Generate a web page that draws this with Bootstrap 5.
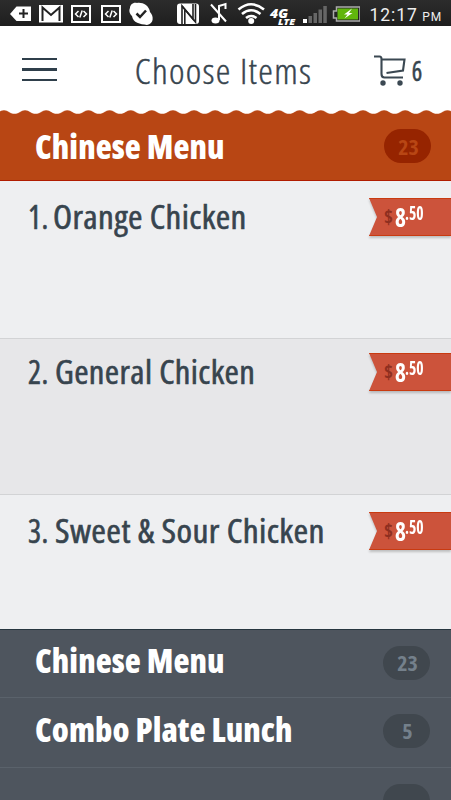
<!DOCTYPE html>
<html lang="en">
<head>
<meta charset="utf-8">
<meta name="viewport" content="width=device-width, initial-scale=1">
<title>Choose Items</title>
<link href="https://cdn.jsdelivr.net/npm/bootstrap@5.3.0/dist/css/bootstrap.min.css" rel="stylesheet">
<style>
body{font-family:"Open Sans","Noto Sans",sans-serif;background:#fff;color:#37444e;height:800px;line-height:1}
.statusbar{height:26px;background:linear-gradient(#2c2c2c,#1e1e1e);color:#eee;font-family:Roboto,sans-serif}
.clock{width:91px;padding-left:9.500px;padding-top:6px;font-size:17.5px;letter-spacing:.95px;line-height:18px}
.clock small{font-size:12px;letter-spacing:.8px;margin-left:4.5px}
.topbar{height:84px;padding:3px 28px 0 22px}
.burger{width:35px;height:24px}
.burger i{height:2.4px;background:#2f3f4b}
.page-title{font-size:34px;font-weight:300;font-stretch:75%;letter-spacing:1.2px;margin-left:17px;padding-top:3px;transform:scaleX(1.088);-webkit-text-stroke:.4px #37444e}
.cart-count{font-size:28px;font-weight:400;font-stretch:75%;margin-left:2px;-webkit-text-stroke:.5px #37444e;transform:scaleX(.88)}
.scallop{height:5px}
.section-row{padding:0 21px 0 35px;color:#fff}
.section-title{font-size:33px;font-weight:800;font-stretch:75%;margin:0;padding-bottom:2px;letter-spacing:.08px}
.count-pill{width:47px;height:34px;border-radius:17px;font-size:22px;font-weight:700;font-stretch:75%;padding-left:2px;padding-bottom:1px}
.is-open{height:66px;background:#b84614;border-bottom:1px solid #b01c00;padding-right:20px}
.is-open .count-pill{background:#962400;color:#b84614;margin-bottom:3px}
.is-closed{background:#4e555e;border-bottom:1px solid #5a626b}
.is-closed .section-title{padding-bottom:6px}
.is-closed .count-pill{background:#40474e;color:#74808b;margin-bottom:2px}
.dish{background:#eeeff1;border-bottom:1px solid #d2d3d5;padding-left:28px}
.dish-alt{background:#e7e7e9}
.dish-name{font-size:33px;font-weight:400;font-stretch:75%;letter-spacing:.35px;margin:-1px 0 0;-webkit-text-stroke:.6px #37444e;white-space:nowrap}
.dish-no{width:27px;flex:none}
.dish-no b{display:inline-block;font-weight:inherit;transform:scaleX(.93);transform-origin:0 0}
.dish-label{transform:scaleX(var(--fit));transform-origin:0 0}
.ribbon{width:82px;height:38px;flex:none;filter:drop-shadow(0 2px 1px rgba(0,0,0,.2))}
.ribbon-shape{background:#cc533b;border-top:1px solid #c93a10;border-bottom:1px solid #c93a10;clip-path:polygon(0 0,100% 0,100% 100%,0 100%,8px 50%);padding-left:15px;color:#fff}
.cur{font-size:19px;font-weight:700;font-stretch:75%;color:#8e2f20;width:10.500px}
.amt{font-size:27px;font-weight:700;font-stretch:75%;width:10.500px;padding-bottom:2px;transform:scaleX(.86);transform-origin:0 0}
.cents{font-size:19px;font-weight:700;font-stretch:75%;padding-bottom:8px;transform:scaleX(.82);transform-origin:0 0}
</style>
</head>
<body class="d-flex flex-column overflow-hidden">
<div class="statusbar d-flex flex-shrink-0">
<svg width="360" height="26" viewBox="0 0 360 26" fill="none" stroke="#fff">
<path d="M10 14l6.500-7.500H31v14.500H16.500z" fill="#fff" stroke="none"/><path d="M19 13.500h9M23.500 9v9" stroke="#222" stroke-width="2"/>
<rect x="39" y="5" width="24" height="17.500" fill="#fff" stroke="none"/><path d="M42.500 21V7.500L51 15l8.500-7.500V21" stroke="#222" stroke-width="2"/>
<g id="dev"><rect x="72" y="6" width="18" height="16" stroke-width="2"/><path d="M78.500 11l-3 3 3 3M83.500 11l3 3-3 3M82.200 10.500l-2.400 7" stroke-width="1.500"/></g><use href="#dev" x="30"/>
<path d="M130 8c0-3 3-6 7-5 5-1 12 2 13 9 4 4 4 12-3 13-7-1-14-2-15-9-3-3-3-6-2-8z" fill="#fff" stroke="none"/><path d="M136.500 13.500l3.500 3.500 6-6.500" stroke="#222" stroke-width="2.500"/>
<rect x="177" y="3.500" width="22" height="20.500" rx="3" fill="#fff" stroke="none"/><path d="M182 24V6l11 13V4" stroke="#222" stroke-width="1.600"/><path d="M184.800 24V10M195.500 4v18L182 6" stroke="#222" stroke-width="1.600"/>
<path d="M219 20V6l6.500-2v5M211 4.500l15 17" stroke-width="2"/><ellipse cx="215.500" cy="20.500" rx="4" ry="3" fill="#fff" stroke="none"/>
<g stroke-width="2.600"><path d="M238.500 9.500q12.500-10.500 25.500 0M242 14q9-7.500 18.500 0M246 18q5-4 10.500 0"/></g><circle cx="251.200" cy="21" r="3" fill="#fff" stroke="none"/>
<g fill="#fff" stroke="none" font-family="Open Sans, sans-serif" font-style="italic" font-weight="800"><text x="270" y="17.500" font-size="13" textLength="18" lengthAdjust="spacingAndGlyphs">4G</text><text x="278" y="25" font-size="8" textLength="17" lengthAdjust="spacingAndGlyphs">LTE</text></g>
<g stroke="none" fill="#666"><path d="M303 19h4v4h-4z" fill="#fff"/><path d="M308.500 16h3.500v7h-3.500zM313.500 13h3.500v10h-3.500zM318.500 9.500h3.500V23h-3.500zM323.300 6h3.500v17h-3.500z"/></g>
<path d="M336.500 7H360v14h-23.500v-3H333.500v-7h3z" stroke="#aaa" stroke-width="1.500"/><path d="M337.500 8.500H358v11h-20.500z" fill="#61b60c" stroke="none"/><path d="M352 8.500l-8 6h3.500l-3 4 8-5.500H349z" fill="#fff" stroke="none"/>
</svg>
<div class="clock text-nowrap">12:17<small>PM</small></div>
</div>
<header class="topbar d-flex align-items-center justify-content-between flex-shrink-0">
<div class="burger d-flex flex-column justify-content-between"><i></i><i></i><i></i></div>
<h1 class="page-title mb-0 text-nowrap">Choose Items</h1>
<div class="d-flex align-items-center">
<svg width="36" height="32" viewBox="0 0 36 32" fill="none" stroke="#3b4852" stroke-width="2.100"><path d="M1 2.500h5.500Q8.500 2.500 8.500 5v15q0 3.500 3 3.500H30M8.500 5.500H31.500L30 16.500 13.500 19"/><g fill="#3b4852" stroke="none"><circle cx="10" cy="29" r="2.700"/><circle cx="27" cy="29" r="2.700"/></g></svg>
<span class="cart-count">6</span></div>
</header>
<svg class="scallop flex-shrink-0" width="451" height="5" viewBox="0 0 451 5"><defs><pattern id="wave" x="-6.600" width="21.120" height="5" patternUnits="userSpaceOnUse"><path d="M0 5V3.800C5 3.800 6 .2 10.560 .2S16 3.800 21.120 3.800V5z" fill="#b84614"/></pattern></defs><rect width="451" height="5" fill="url(#wave)"/></svg>
<section class="section-row is-open d-flex align-items-center justify-content-between flex-shrink-0"><h2 class="section-title">Chinese Menu</h2><span class="count-pill d-flex align-items-center justify-content-center">23</span></section>
<article class="dish d-flex justify-content-between align-items-start flex-shrink-0" style="height:158px;padding-top:17px"><h3 class="dish-name d-flex"><span class="dish-no" style="width:25px"><b>1.</b></span><span class="dish-label" style="--fit:1.06">Orange Chicken</span></h3><div class="ribbon"><div class="ribbon-shape h-100 d-flex align-items-center"><span class="cur">$</span><span class="amt">8</span><span class="cents">.50</span></div></div></article>
<article class="dish dish-alt d-flex justify-content-between align-items-start flex-shrink-0" style="height:156px;padding-top:14px"><h3 class="dish-name d-flex"><span class="dish-no"><b>2.</b></span><span class="dish-label" style="--fit:1.05">General Chicken</span></h3><div class="ribbon"><div class="ribbon-shape h-100 d-flex align-items-center"><span class="cur">$</span><span class="amt">8</span><span class="cents">.50</span></div></div></article>
<article class="dish d-flex justify-content-between align-items-start flex-shrink-0 border-0" style="height:134px;padding-top:17px"><h3 class="dish-name d-flex"><span class="dish-no"><b>3.</b></span><span class="dish-label" style="--fit:1.073">Sweet &amp; Sour Chicken</span></h3><div class="ribbon"><div class="ribbon-shape h-100 d-flex align-items-center"><span class="cur">$</span><span class="amt">8</span><span class="cents">.50</span></div></div></article>
<section class="section-row is-closed d-flex align-items-center justify-content-between flex-shrink-0" style="height:69px;border-top:1px solid #26353f"><h2 class="section-title">Chinese Menu</h2><span class="count-pill d-flex align-items-center justify-content-center">23</span></section>
<section class="section-row is-closed d-flex align-items-center justify-content-between flex-shrink-0" style="height:70px"><h2 class="section-title">Combo Plate Lunch</h2><span class="count-pill d-flex align-items-center justify-content-center mb-1">5</span></section>
<section class="section-row is-closed d-flex justify-content-end flex-shrink-0" style="height:70px;padding-top:16px"><span class="count-pill"></span></section>
<script src="https://cdn.jsdelivr.net/npm/bootstrap@5.3.0/dist/js/bootstrap.bundle.min.js"></script>
</body>
</html>
